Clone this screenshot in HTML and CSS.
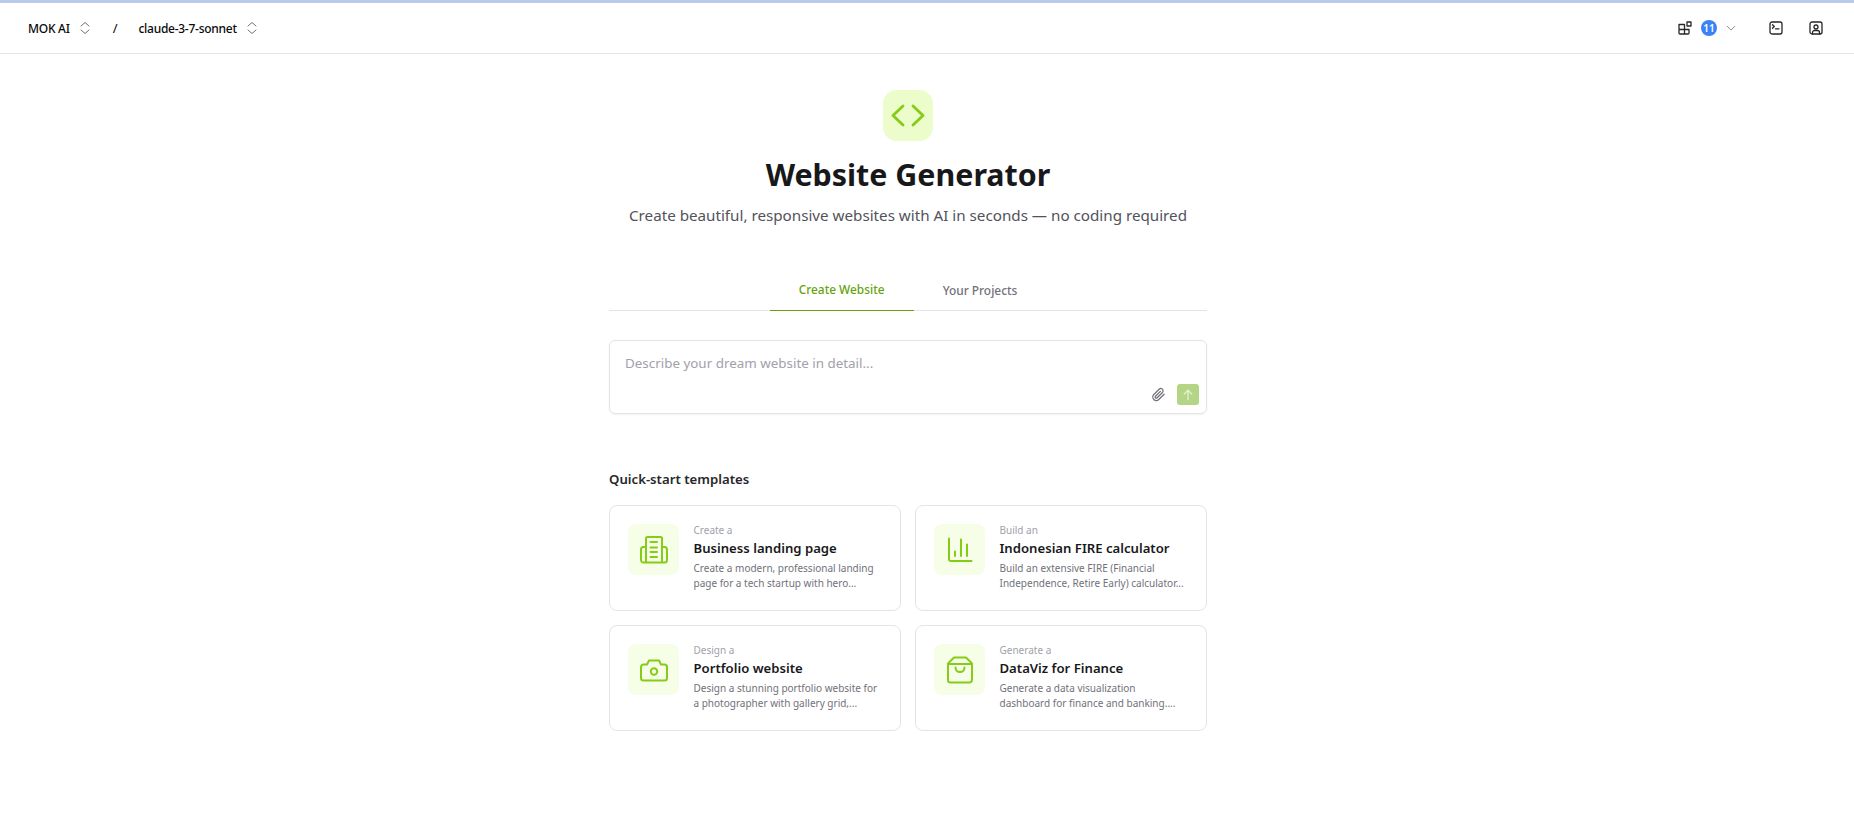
FILE: index.html
```html
<!DOCTYPE html>
<html lang="en">
<head>
<meta charset="utf-8">
<title>Website Generator</title>
<link rel="stylesheet" href="styles.css">
</head>
<body>
<div class="progress"></div>
<header class="topbar">
  <div class="crumbs">
    <span class="crumb">MOK AI</span>
    <svg class="updown" viewBox="0 0 12 16"><path d="M2 6 6 2.500 10 6M2 10 6 13.500 10 10"/></svg>
    <span class="slash">/</span>
    <span class="crumb">claude-3-7-sonnet</span>
    <svg class="updown" viewBox="0 0 12 16"><path d="M2 6 6 2.500 10 6M2 10 6 13.500 10 10"/></svg>
  </div>
  <div class="actions">
    <svg class="ico blocks" viewBox="0 0 14 14"><path d="M1 3.500h5.500v9.500H2a1 1 0 0 1-1-1zM1 8.500h10V12a1 1 0 0 1-1 1H6.500M9 1h4v4H9z"/></svg>
    <span class="badge">11</span>
    <svg class="chev" viewBox="0 0 12 12"><path d="M1.500 4 6 8.500 10.500 4"/></svg>
    <svg class="ico term" viewBox="0 0 14 14"><rect x="1" y="1" width="12" height="12" rx="2"/><path d="m3.500 3.800 1.800 1.700-1.800 1.700M6.500 7.800h3.500"/></svg>
    <svg class="ico user" viewBox="0 0 14 14"><rect x="1" y="1" width="12" height="12" rx="2"/><circle cx="7" cy="6" r="2"/><path d="M3.500 13v-1.500a2 2 0 0 1 2-2h3a2 2 0 0 1 2 2V13"/></svg>
  </div>
</header>
<main class="main">
  <div class="page">
    <div class="logo">
      <svg viewBox="0 0 34 24"><path d="M12 2 2 11.500 12 21M22 2l10 9.500L22 21"/></svg>
    </div>
    <h1 class="title">Website Generator</h1>
    <p class="subtitle">Create beautiful, responsive websites with AI in seconds — no coding required</p>

    <nav class="tabs">
      <span class="tab active">Create Website</span>
      <span class="tab muted">Your Projects</span>
    </nav>

    <section class="prompt">
      <span class="placeholder">Describe your dream website in detail...</span>
      <div class="prompt-tools">
        <svg class="clip" viewBox="0 0 24 24"><path d="M21 11.500 12.500 20a5.500 5.500 0 0 1-8-8l8.500-8.500a3.700 3.700 0 0 1 5.300 5.200L9.800 17.300a1.800 1.800 0 0 1-2.600-2.600L15 7"/></svg>
        <span class="send"><svg viewBox="0 0 14 14"><path d="M7 12.500V1.500M2.500 6 7 1.500 11.500 6"/></svg></span>
      </div>
    </section>

    <h2 class="section-title">Quick-start templates</h2>
    <div class="cards">
      <article class="card">
        <div class="card-icon">
          <svg viewBox="0 0 28 28"><path d="M6 2.500A1.500 1.500 0 0 1 7.500 1h13A1.500 1.500 0 0 1 22 2.500v24H6zM6 11H3.500A2.500 2.500 0 0 0 1 13.500V24a2.500 2.500 0 0 0 2.500 2.500h21A2.500 2.500 0 0 0 27 24V13.500a2.500 2.500 0 0 0-2.500-2.500H22M10.500 6H17M10.500 11.500H17M10.500 16H17M10.500 21H17"/></svg>
        </div>
        <div class="card-body">
          <div class="card-kicker">Create a</div>
          <div class="card-name">Business landing page</div>
          <p class="card-desc">Create a modern, professional landing page for a tech startup with hero...</p>
        </div>
      </article>
      <article class="card">
        <div class="card-icon">
          <svg viewBox="0 0 28 28"><path d="M3 2.500V23a2 2 0 0 0 2 2h20.500M9 15.500V20M15 3.500V20M21 8.500V20"/></svg>
        </div>
        <div class="card-body">
          <div class="card-kicker">Build an</div>
          <div class="card-name">Indonesian FIRE calculator</div>
          <p class="card-desc">Build an extensive FIRE (Financial Independence, Retire Early) calculator...</p>
        </div>
      </article>
      <article class="card">
        <div class="card-icon">
          <svg viewBox="0 0 28 28"><path d="M3.500 8.500H7L9 4.500h10l2 4h3.500A2.500 2.500 0 0 1 27 11v11a2.500 2.500 0 0 1-2.500 2.500h-21A2.500 2.500 0 0 1 1 22V11a2.500 2.500 0 0 1 2.500-2.500z"/><circle cx="14" cy="15.500" r="3.200"/></svg>
        </div>
        <div class="card-body">
          <div class="card-kicker">Design a</div>
          <div class="card-name">Portfolio website</div>
          <p class="card-desc">Design a stunning portfolio website for a photographer with gallery grid,...</p>
        </div>
      </article>
      <article class="card">
        <div class="card-icon">
          <svg viewBox="0 0 28 28"><path d="M8 1.500h12L26 7.500V24a2.500 2.500 0 0 1-2.500 2.500h-19A2.500 2.500 0 0 1 2 24V7.500zM2 8h24M9.500 11.500a4.500 4.500 0 0 0 9 0"/></svg>
        </div>
        <div class="card-body">
          <div class="card-kicker">Generate a</div>
          <div class="card-name">DataViz for Finance</div>
          <p class="card-desc">Generate a data visualization dashboard for finance and banking....</p>
        </div>
      </article>
    </div>
  </div>
</main>
</body>
</html>
```
FILE: styles.css
```css
* { box-sizing: border-box; }
html, body { margin: 0; height: 100%; }
body {
  background: #fff;
  color: #18181b;
  font-family: "Noto Sans", "Open Sans", sans-serif;
  overflow: hidden;
}
svg { display: block; fill: none; stroke: currentColor; stroke-linecap: round; stroke-linejoin: round; }

.progress { height: 3px; background: #b9cbec; }
.topbar {
  height: 51px;
  border-bottom: 1px solid #e4e4e7;
  display: flex;
  align-items: center;
  justify-content: space-between;
  padding: 0 31px 0 28px;
}
.crumbs { display: flex; align-items: center; }
.crumb { font-size: 12px; font-weight: 500; color: #09090b; letter-spacing: -0.27px; }
.updown { width: 12px; height: 16px; margin-left: 9px; color: #71717a; stroke-width: 1; }
.slash { font-size: 13px; margin: 0 21px 0 22px; color: #09090b; }
.actions { display: flex; align-items: center; }
.ico { width: 14px; height: 14px; color: #27272a; stroke-width: 1.300; }
.badge {
  width: 16px; height: 16px; margin-left: 9px;
  border-radius: 50%;
  background: #3b82f6; color: #fff;
  font-size: 10px; font-weight: 600;
  display: flex; align-items: center; justify-content: center;
}
.chev { width: 10px; height: 10px; margin-left: 9px; color: #8a8a93; stroke-width: 1.200; }
.term { margin-left: 33px; }
.user { margin-left: 26px; }

.main { padding-right: 38px; }
.page {
  width: 598px;
  margin: 0 auto;
  padding-top: 36px;
  display: flex;
  flex-direction: column;
}
.logo {
  width: 50px; height: 51px;
  align-self: center;
  background: #ecfccb;
  border-radius: 14px;
  display: flex; align-items: center; justify-content: center;
  color: #84cc16;
}
.logo svg { width: 34px; height: 24px; stroke-width: 2.800; }
.title {
  margin: 12px 0 0;
  text-align: center;
  font-size: 30.400px;
  line-height: 44px;
  font-weight: 700;
  color: #18181b;
}
.subtitle {
  margin: 6px 0 0;
  text-align: center;
  font-size: 15.200px;
  line-height: 24px;
  color: #52525b;
  white-space: nowrap;
}
.tabs {
  margin-top: 41px;
  height: 43px;
  display: flex;
  justify-content: center;
  border-bottom: 1px solid #e4e4e7;
}
.tab {
  padding: 0 29px;
  font-size: 11.900px;
  font-weight: 500;
  line-height: 42px;
}
.tab.active {
  color: #65a30d;
  border-bottom: 1px solid #65a30d;
  margin-bottom: -1px;
  height: 43px;
}
.tab.muted { color: #71717a; padding-top: 1px; }
.prompt {
  margin-top: 29px;
  height: 74px;
  border: 1px solid #e4e4e7;
  border-radius: 6px;
  box-shadow: 0 1px 2px rgba(0, 0, 0, .05);
  padding: 12px 15px;
  position: relative;
}
.placeholder { font-size: 13.400px; line-height: 20px; color: #a1a1aa; display: block; }
.prompt-tools {
  position: absolute;
  right: 7px; bottom: 8px;
  display: flex; align-items: center;
}
.clip { width: 15px; height: 15px; color: #71717a; stroke-width: 2; margin-right: 11px; }
.send {
  width: 22px; height: 21px;
  background: #b3d585;
  border-radius: 3px;
  display: flex; align-items: center; justify-content: center;
  color: #e6f2d4;
}
.send svg { width: 12px; height: 12px; stroke-width: 1.500; }
.section-title {
  margin: 56px 0 0;
  font-size: 13.200px;
  line-height: 18px;
  font-weight: 600;
  color: #27272a;
}
.cards {
  margin-top: 17px;
  display: grid;
  grid-template-columns: 1fr 1fr;
  gap: 14px;
}
.card {
  height: 106px;
  border: 1px solid #e4e4e7;
  border-radius: 8px;
  padding: 18px 19px 0 18px;
  display: flex;
  gap: 14.500px;
}
.card-icon {
  width: 51px; height: 51px;
  flex: none;
  background: #f7fee7;
  border-radius: 8px;
  display: flex; align-items: center; justify-content: center;
  color: #84cc16;
}
.card-icon svg { width: 28px; height: 28px; stroke-width: 2; }
.card-kicker { font-size: 10px; line-height: 14px; color: #a1a1aa; margin-top: -1px; }
.card-name { font-size: 13.150px; line-height: 18px; font-weight: 600; color: #18181b; margin-top: 2px; }
.card-desc {
  margin: 4px 0 0;
  font-size: 10px;
  line-height: 14.500px;
  color: #71717a;
}
```
